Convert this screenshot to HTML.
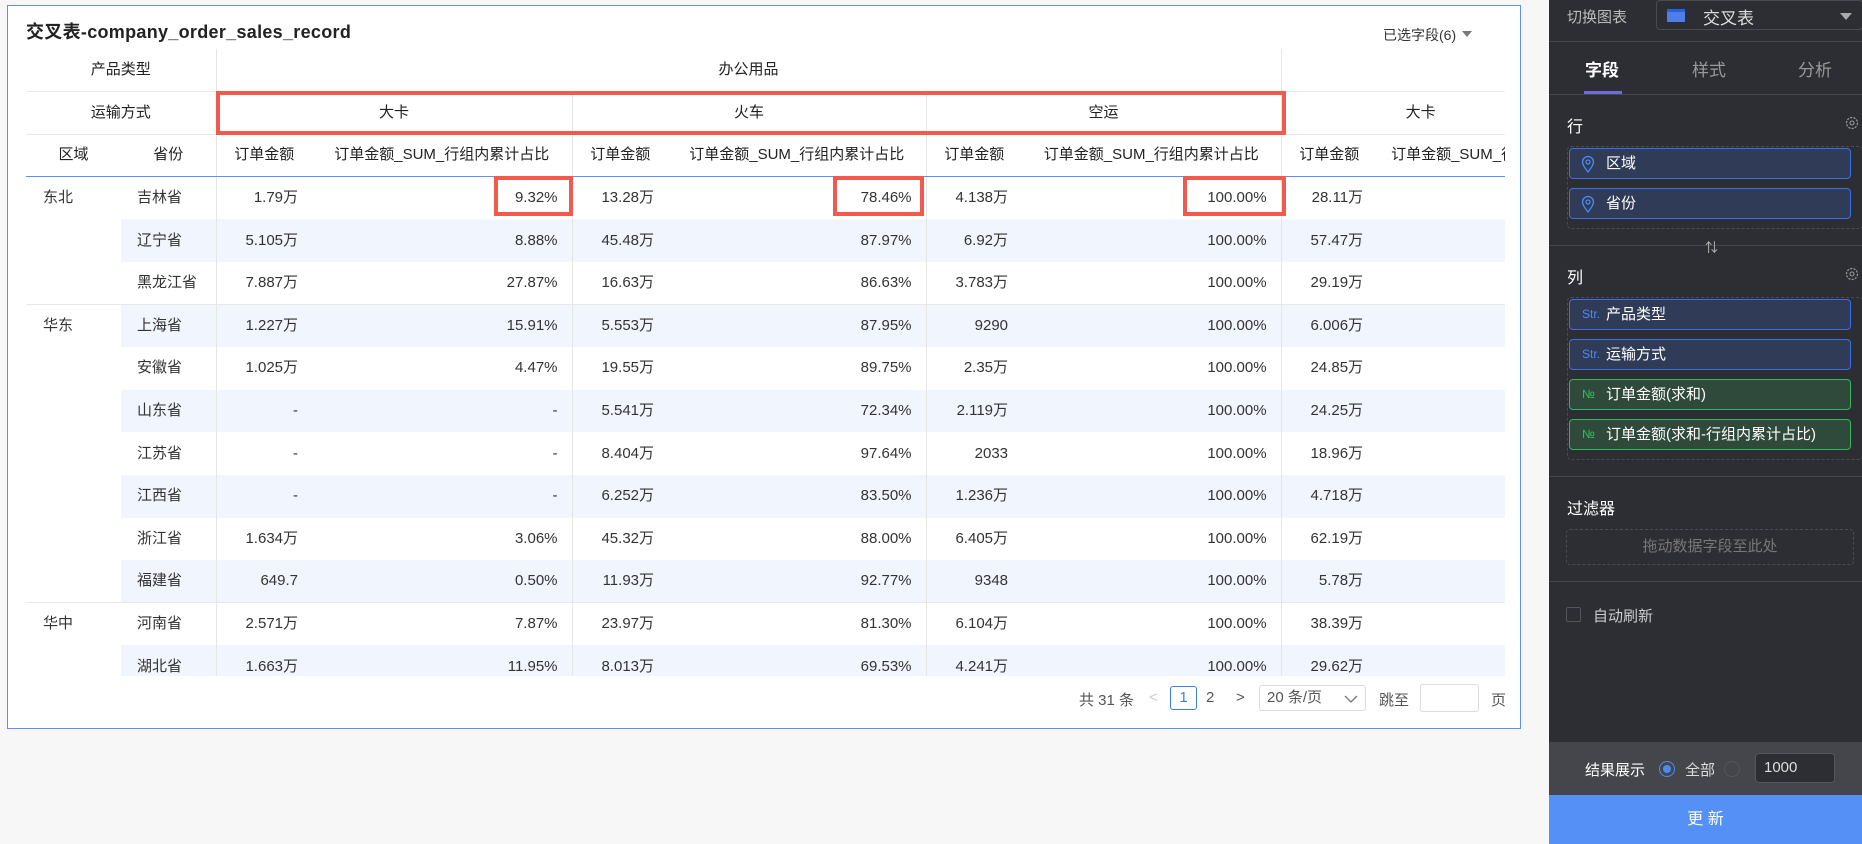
<!DOCTYPE html>
<html><head><meta charset="utf-8">
<style>
*{box-sizing:border-box;margin:0;padding:0}
body{width:1862px;height:844px;background:#f7f7f7;font-family:"Liberation Sans","Noto Sans CJK SC",sans-serif;position:relative;overflow:hidden;color:#333}
.card{position:absolute;left:7px;top:5px;width:1514px;height:724px;background:#fff;border:1px solid #5b8ff9}
.title{position:absolute;left:18px;top:12px;font-size:18px;font-weight:bold;color:#222;letter-spacing:0.3px}
.sel{position:absolute;left:1375px;top:19px;font-size:14px;color:#333}
.sel:after{content:"";display:inline-block;margin-left:6px;border:5px solid transparent;border-top:6px solid #777;vertical-align:-2px}
.wrap{position:absolute;left:26px;top:49px;width:1479px;height:627px;overflow:hidden}
table{border-collapse:collapse;table-layout:fixed;width:1680px;font-size:15px}
td{height:42.6px;line-height:20px;vertical-align:middle;white-space:nowrap;overflow:hidden;padding:0 14px;border:0}
.h td{text-align:center;color:#222}
.r{text-align:right}
.vl{border-left:1px solid #e6e6e6}
.hb td{border-bottom:1px solid #e8e8e8}
.bb td{border-bottom:1px solid #5b8ff9}
.g td{border-top:1px solid #e8e8e8}
.s td.p,.s td.d{background:#f1f5fd}
td.rg{padding-left:17px;vertical-align:top;padding-top:11px}
td.p{padding-left:16px}
.red{position:absolute;border:4px solid #f25a4e}
.pg{position:absolute;top:689px;font-size:15px;color:#555}
.panel{position:absolute;left:1549px;top:0;width:313px;height:844px;background:#2d2e34;color:#ddd}
.sep{position:absolute;left:0;width:313px;height:1px;background:#45464c}
.fld{position:absolute;left:20px;width:282px;height:31px;border-radius:4px;font-size:15px;color:#fff;line-height:29px;padding-left:36px}
.fb{background:#2f3b57;border:1px solid #3d6fe6}
.fg{background:#2f4a3b;border:1px solid #2eb85c}
.ic{position:absolute;left:12px;top:0;font-size:12px}
.pin{position:absolute;left:11px;top:6px}
.gear{position:absolute;left:296px}
</style></head><body>
<div class="card">
<div class="title">交叉表-company_order_sales_record</div>
<div class="sel">已选字段(6)</div>
</div>
<div class="wrap">
<table>
<colgroup><col style="width:95px"><col style="width:95px"><col style="width:96px"><col style="width:260px"><col style="width:96px"><col style="width:258px"><col style="width:96px"><col style="width:259px"><col style="width:96px"><col style="width:329px"></colgroup>
<tr class="h hb"><td colspan="2">产品类型</td><td colspan="6" class="vl">办公用品</td><td colspan="2" class="vl"></td></tr>
<tr class="h hb"><td colspan="2">运输方式</td><td colspan="2" class="vl">大卡</td><td colspan="2" class="vl">火车</td><td colspan="2" class="vl">空运</td><td colspan="2" class="vl" style="text-align:left;padding-left:124px">大卡</td></tr>
<tr class="h bb"><td>区域</td><td>省份</td><td class="vl">订单金额</td><td>订单金额_SUM_行组内累计占比</td><td class="vl">订单金额</td><td>订单金额_SUM_行组内累计占比</td><td class="vl">订单金额</td><td>订单金额_SUM_行组内累计占比</td><td class="vl">订单金额</td><td style="text-align:left">订单金额_SUM_行组内累计占比</td></tr>
<tr><td class="rg" rowspan="3">东北</td><td class="p">吉林省</td><td class="d r vl">1.79万</td><td class="d r">9.32%</td><td class="d r vl">13.28万</td><td class="d r">78.46%</td><td class="d r vl">4.138万</td><td class="d r">100.00%</td><td class="d r vl">28.11万</td><td class="d"></td></tr>
<tr class="s"><td class="p">辽宁省</td><td class="d r vl">5.105万</td><td class="d r">8.88%</td><td class="d r vl">45.48万</td><td class="d r">87.97%</td><td class="d r vl">6.92万</td><td class="d r">100.00%</td><td class="d r vl">57.47万</td><td class="d"></td></tr>
<tr><td class="p">黑龙江省</td><td class="d r vl">7.887万</td><td class="d r">27.87%</td><td class="d r vl">16.63万</td><td class="d r">86.63%</td><td class="d r vl">3.783万</td><td class="d r">100.00%</td><td class="d r vl">29.19万</td><td class="d"></td></tr>
<tr class="s g"><td class="rg" rowspan="7" style="background:#fff">华东</td><td class="p">上海省</td><td class="d r vl">1.227万</td><td class="d r">15.91%</td><td class="d r vl">5.553万</td><td class="d r">87.95%</td><td class="d r vl">9290</td><td class="d r">100.00%</td><td class="d r vl">6.006万</td><td class="d"></td></tr>
<tr><td class="p">安徽省</td><td class="d r vl">1.025万</td><td class="d r">4.47%</td><td class="d r vl">19.55万</td><td class="d r">89.75%</td><td class="d r vl">2.35万</td><td class="d r">100.00%</td><td class="d r vl">24.85万</td><td class="d"></td></tr>
<tr class="s"><td class="p">山东省</td><td class="d r vl">-</td><td class="d r">-</td><td class="d r vl">5.541万</td><td class="d r">72.34%</td><td class="d r vl">2.119万</td><td class="d r">100.00%</td><td class="d r vl">24.25万</td><td class="d"></td></tr>
<tr><td class="p">江苏省</td><td class="d r vl">-</td><td class="d r">-</td><td class="d r vl">8.404万</td><td class="d r">97.64%</td><td class="d r vl">2033</td><td class="d r">100.00%</td><td class="d r vl">18.96万</td><td class="d"></td></tr>
<tr class="s"><td class="p">江西省</td><td class="d r vl">-</td><td class="d r">-</td><td class="d r vl">6.252万</td><td class="d r">83.50%</td><td class="d r vl">1.236万</td><td class="d r">100.00%</td><td class="d r vl">4.718万</td><td class="d"></td></tr>
<tr><td class="p">浙江省</td><td class="d r vl">1.634万</td><td class="d r">3.06%</td><td class="d r vl">45.32万</td><td class="d r">88.00%</td><td class="d r vl">6.405万</td><td class="d r">100.00%</td><td class="d r vl">62.19万</td><td class="d"></td></tr>
<tr class="s"><td class="p">福建省</td><td class="d r vl">649.7</td><td class="d r">0.50%</td><td class="d r vl">11.93万</td><td class="d r">92.77%</td><td class="d r vl">9348</td><td class="d r">100.00%</td><td class="d r vl">5.78万</td><td class="d"></td></tr>
<tr class="g"><td class="rg" rowspan="2">华中</td><td class="p">河南省</td><td class="d r vl">2.571万</td><td class="d r">7.87%</td><td class="d r vl">23.97万</td><td class="d r">81.30%</td><td class="d r vl">6.104万</td><td class="d r">100.00%</td><td class="d r vl">38.39万</td><td class="d"></td></tr>
<tr class="s"><td class="p">湖北省</td><td class="d r vl">1.663万</td><td class="d r">11.95%</td><td class="d r vl">8.013万</td><td class="d r">69.53%</td><td class="d r vl">4.241万</td><td class="d r">100.00%</td><td class="d r vl">29.62万</td><td class="d"></td></tr>
</table>
</div>
<div class="red" style="left:216px;top:91px;width:1070px;height:44px"></div>
<div class="red" style="left:494px;top:176px;width:79px;height:40px"></div>
<div class="red" style="left:833px;top:176px;width:91px;height:40px"></div>
<div class="red" style="left:1183px;top:176px;width:103px;height:40px"></div>
<div class="pg" style="left:1079px">共 31 条</div>
<div class="pg" style="left:1149px;color:#ccc">&lt;</div>
<div class="pg" style="left:1170px;top:686px;width:27px;height:24px;border:1px solid #3d7ef0;border-radius:3px;color:#3d7ef0;text-align:center;line-height:22px">1</div>
<div class="pg" style="left:1206px">2</div>
<div class="pg" style="left:1236px">&gt;</div>
<div class="pg" style="left:1259px;top:685px;width:107px;height:26px;border:1px solid #ddd;border-radius:3px;padding-left:7px;line-height:24px">20 条/页 <svg style="position:absolute;left:84px;top:9px" width="14" height="8" viewBox="0 0 14 8"><path d="M1 1l6 6 6-6" fill="none" stroke="#777" stroke-width="1.3"/></svg></div>
<div class="pg" style="left:1379px">跳至</div>
<div class="pg" style="left:1420px;top:684px;width:59px;height:28px;border:1px solid #ddd;border-radius:3px"></div>
<div class="pg" style="left:1491px">页</div>

<div class="panel">
<div style="position:absolute;left:18px;top:6px;font-size:15px;color:#bbb">切换图表</div>
<div style="position:absolute;left:107px;top:0;width:207px;height:30px;border:1px solid #4a4b52;border-radius:4px">
<div style="position:absolute;left:10px;top:8px;width:18px;height:13px;background:#4d7ee8;border-top:3px solid #2a5fe0"></div>
<div style="position:absolute;left:46px;top:3px;font-size:17px;color:#ddd">交叉表</div>
<div style="position:absolute;right:10px;top:12px;border:6px solid transparent;border-top:7px solid #aaa"></div>
</div>
<div class="sep" style="top:41px"></div>
<div style="position:absolute;left:36px;top:56px;font-size:17px;color:#fff;font-weight:bold">字段</div>
<div style="position:absolute;left:143px;top:56px;font-size:17px;color:#999">样式</div>
<div style="position:absolute;left:249px;top:56px;font-size:17px;color:#999">分析</div>
<div style="position:absolute;left:35px;top:91px;width:38px;height:3px;background:#6e6cdc"></div>
<div class="sep" style="top:94px"></div>
<div style="position:absolute;left:18px;top:113px;font-size:16px;color:#fff">行</div>
<svg class="gear" style="top:116px" width="14" height="14" viewBox="0 0 14 14"><circle cx="7" cy="7" r="5.5" fill="none" stroke="#999" stroke-width="1.2" stroke-dasharray="2.2 1.2"/><circle cx="7" cy="7" r="2" fill="none" stroke="#999" stroke-width="1.1"/></svg>
<div style="position:absolute;left:18px;top:146px;width:296px;height:83px;border:1px dashed #4a4b52;border-radius:4px"></div>
<div class="fld fb" style="top:148px"><svg class="pin" width="14" height="18" viewBox="0 0 14 18"><path d="M7 17C3 12 1.5 9.5 1.5 7a5.5 5.5 0 0 1 11 0c0 2.5-1.5 5-5.5 10z" fill="none" stroke="#4d8af0" stroke-width="1.3"/><circle cx="7" cy="7" r="2" fill="none" stroke="#4d8af0" stroke-width="1.3"/></svg>区域</div>
<div class="fld fb" style="top:188px"><svg class="pin" width="14" height="18" viewBox="0 0 14 18"><path d="M7 17C3 12 1.5 9.5 1.5 7a5.5 5.5 0 0 1 11 0c0 2.5-1.5 5-5.5 10z" fill="none" stroke="#4d8af0" stroke-width="1.3"/><circle cx="7" cy="7" r="2" fill="none" stroke="#4d8af0" stroke-width="1.3"/></svg>省份</div>
<div class="sep" style="top:245px"></div>
<div style="position:absolute;left:156px;top:237px;font-size:13px;color:#bbb">⇅</div>
<div style="position:absolute;left:18px;top:264px;font-size:16px;color:#fff">列</div>
<svg class="gear" style="top:267px" width="14" height="14" viewBox="0 0 14 14"><circle cx="7" cy="7" r="5.5" fill="none" stroke="#999" stroke-width="1.2" stroke-dasharray="2.2 1.2"/><circle cx="7" cy="7" r="2" fill="none" stroke="#999" stroke-width="1.1"/></svg>
<div style="position:absolute;left:18px;top:297px;width:296px;height:163px;border:1px dashed #4a4b52;border-radius:4px"></div>
<div class="fld fb" style="top:299px"><span class="ic" style="color:#4d8af0">Str.</span>产品类型</div>
<div class="fld fb" style="top:339px"><span class="ic" style="color:#4d8af0">Str.</span>运输方式</div>
<div class="fld fg" style="top:379px"><span class="ic" style="color:#2ec462">№</span>订单金额(求和)</div>
<div class="fld fg" style="top:419px"><span class="ic" style="color:#2ec462">№</span>订单金额(求和-行组内累计占比)</div>
<div class="sep" style="top:476px"></div>
<div style="position:absolute;left:18px;top:495px;font-size:16px;color:#fff">过滤器</div>
<div style="position:absolute;left:17px;top:529px;width:288px;height:36px;border:1px dashed #4a4b52;border-radius:4px;text-align:center;line-height:34px;font-size:15px;color:#777">拖动数据字段至此处</div>
<div class="sep" style="top:581px"></div>
<div style="position:absolute;left:17px;top:607px;width:15px;height:15px;border:1px solid #555;border-radius:2px"></div>
<div style="position:absolute;left:44px;top:605px;font-size:15px;color:#ccc">自动刷新</div>
<div style="position:absolute;left:0;top:742px;width:313px;height:53px;background:#45464c">
<div style="position:absolute;left:36px;top:17px;font-size:15px;color:#fff">结果展示</div>
<div style="position:absolute;left:110px;top:19px;width:16px;height:16px;border:1px solid #4d8af0;border-radius:50%"><div style="margin:3px;width:8px;height:8px;border-radius:50%;background:#4d8af0"></div></div>
<div style="position:absolute;left:136px;top:17px;font-size:15px;color:#ddd">全部</div>
<div style="position:absolute;left:175px;top:19px;width:16px;height:16px;border:1px solid #555;border-radius:50%"></div>
<div style="position:absolute;left:206px;top:11px;width:80px;height:30px;border:1px solid #555;border-radius:4px;background:#2d2e34;padding-left:8px;line-height:28px;font-size:15px;color:#ddd">1000</div>
</div>
<div style="position:absolute;left:0;top:795px;width:313px;height:49px;background:#5590f6;color:#fff;text-align:center;line-height:49px;font-size:16px">更 新</div>
</div>
</body></html>
